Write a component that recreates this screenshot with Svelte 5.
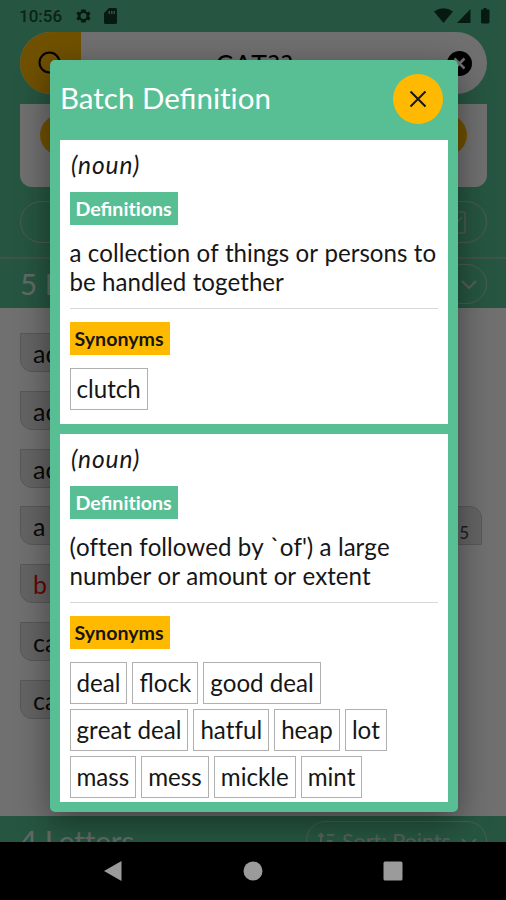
<script>
  const tiles = [
    { word: 'ad' },
    { word: 'ac' },
    { word: 'ac' },
    { word: 'a', points: 5 },
    { word: 'b', blank: true },
    { word: 'ca' },
    { word: 'ca' }
  ];

  const entries = [
    {
      type: '(noun)',
      text: 'a collection of things or persons to be handled together',
      synonyms: ['clutch']
    },
    {
      type: '(noun)',
      text: "(often followed by `of') a large number or amount or extent",
      synonyms: ['deal', 'flock', 'good deal', 'great deal', 'hatful', 'heap', 'lot', 'mass', 'mess', 'mickle', 'mint']
    }
  ];

  let open = $state(true);
</script>

<div class="screen">
  <div class="page">
    <header>
      <div class="status">
        <span class="time">10:56</span>
        <svg class="gear" width="15" height="16" viewBox="2 2 20 20"><path fill-rule="evenodd" d="M19.4 13a7.500 7.500 0 0 0 0-2l2.100-1.600-2-3.500-2.500 1a7.600 7.600 0 0 0-1.700-1L15 3.200h-6l-.3 2.700a7.600 7.600 0 0 0-1.700 1l-2.500-1-2 3.500L4.600 11a7.500 7.500 0 0 0 0 2l-2.100 1.600 2 3.500 2.500-1a7.600 7.600 0 0 0 1.700 1l.3 2.700h6l.3-2.700a7.600 7.600 0 0 0 1.700-1l2.500 1 2-3.500zM12 16a4 4 0 1 1 0-8 4 4 0 0 1 0 8z" /></svg>
        <svg class="sd" width="13" height="16" viewBox="0 0 13 16"><path fill-rule="evenodd" d="M5 0h6.500A1.500 1.500 0 0 1 13 1.500v13a1.500 1.500 0 0 1-1.500 1.500h-10A1.500 1.500 0 0 1 0 14.500V5zM4.500 3v3H6V3zM7 3v3h1.500V3zM9.500 3v3H11V3z" /></svg>
        <svg class="signals" width="56" height="16" viewBox="0 0 56 16"><path d="M0 3.500Q9.500-3 19 3.500L9.500 15zM23 15 36.500 1v14zM47.500 1.500h2V0h3v1.500h2q1 0 1 1V14q0 1.500-1.500 1.500h-5.500q-1.500 0-1.500-1.500V2.500q0-1 .5-1z" /></svg>
      </div>

      <div class="search">
        <div class="search-btn">
          <svg width="26" height="26" viewBox="0 0 26 26"><circle cx="11.500" cy="11.500" r="10" /><path d="m18.500 18.500 6 6" /></svg>
        </div>
        <span class="query">CAT??</span>
        <svg class="clear" width="25" height="25" viewBox="0 0 25 25"><circle cx="12.500" cy="12.500" r="12.500" /><path d="m7.500 7.500 10 10m0-10-10 10" /></svg>
      </div>

      <div class="panel"><i></i><i></i></div>

      <div class="filter">
        <svg width="25" height="25" viewBox="0 0 25 25"><rect x="2" y="2" width="21" height="21" rx="1" /><path d="m6 12 5 5 9-10" /></svg>
      </div>
    </header>

    <div class="section">
      <h2>5 Letters</h2>
      <div class="sort">
        <svg width="16" height="18" viewBox="0 0 16 18"><path d="M3 2v14M.5 4.500 3 2l2.500 2.500M9 3h7M9 9h5.500M9 15h4" /></svg>
        <span>Sort: Points</span>
        <svg class="chevron" width="18" height="12" viewBox="0 0 18 12"><path d="m2 2 7 7 7-7" /></svg>
      </div>
    </div>

    <div class="tiles">
      {#each tiles as tile}
        <div class="tile" class:blank={tile.blank} class:wide={tile.points}>
          <span>{tile.word}</span>
          {#if tile.points}<small>{tile.points}</small>{/if}
        </div>
      {/each}
    </div>

    <div class="section last">
      <h2>4 Letters</h2>
      <div class="sort">
        <svg width="16" height="18" viewBox="0 0 16 18"><path d="M3 2v14M.5 4.500 3 2l2.500 2.500M9 3h7M9 9h5.500M9 15h4" /></svg>
        <span>Sort: Points</span>
        <svg class="chevron" width="18" height="12" viewBox="0 0 18 12"><path d="m2 2 7 7 7-7" /></svg>
      </div>
    </div>
  </div>

  {#if open}
    <div class="overlay">
      <div class="modal">
        <div class="modal-head">
          <h1>Batch <span class="liga">Defi</span>nition</h1>
          <button aria-label="Close" onclick={() => (open = false)}>
            <svg width="18" height="18" viewBox="0 0 18 18"><path d="m1.500 1.500 15 15m0-15-15 15" /></svg>
          </button>
        </div>
        <div class="entries">
          {#each entries as entry}
            <section class="entry">
              <em>{entry.type}</em>
              <b class="label"><span class="liga">Defi</span>nitions</b>
              <p>{entry.text}</p>
              <hr />
              <b class="label syn">Synonyms</b>
              <div class="words">
                {#each entry.synonyms as word}
                  <span class:liga={word.startsWith('fl')}>{word}</span>
                {/each}
              </div>
            </section>
          {/each}
        </div>
      </div>
    </div>
  {/if}

  <nav>
    <svg width="20" height="22" viewBox="0 0 20 22"><path d="M18.500 1v20L1 11z" /></svg>
    <svg width="20" height="20" viewBox="0 0 20 20"><circle cx="10" cy="10" r="9.500" /></svg>
    <svg width="20" height="20" viewBox="0 0 20 20"><rect x=".5" y=".5" width="19" height="19" rx="1.500" /></svg>
  </nav>
</div>

<style>
  :global(body) { margin: 0; }
  .screen {
    position: relative; width: 506px; height: 900px; overflow: hidden;
    display: flex; flex-direction: column;
    font-family: Lato, sans-serif; color: #161616;
    font-variant-ligatures: none;
  }
  .screen * { box-sizing: border-box; }
  .liga { font-variant-ligatures: common-ligatures; }
  svg { display: block; flex: none; }
  h1, h2, p { margin: 0; font-weight: 400; }

  .page { height: 842px; overflow: hidden; background: #fff; }
  header { height: 259px; padding: 0 19px 0 20px; background: #58c594; border-bottom: 2px solid #93bda9; }
  .status { display: flex; align-items: center; height: 32px; font: 500 17px Roboto, sans-serif; color: #195037; }
  .status svg { fill: #103d28; }
  .time { margin-left: -1px; }
  .gear { margin-left: 14px; }
  .sd { margin-left: 13px; }
  .signals { margin-left: auto; margin-right: -3px; }
  .search { display: flex; align-items: center; height: 62px; border-radius: 31px; background: #fff; overflow: hidden; }
  .search-btn { width: 61px; height: 62px; padding: 19px 0 0 18px; background: #ffb900; }
  .search-btn svg { fill: none; stroke: #000; stroke-width: 2; }
  .query { flex: 1; text-align: center; font-size: 26.500px; letter-spacing: 1px; padding: 2px 19px 0 0; color: #000; }
  .clear { margin-right: 15px; }
  .clear path { stroke: #fff; stroke-width: 2.500; }
  .panel {
    display: flex; justify-content: space-between; height: 83px; margin-top: 10px;
    padding: 11px 20px; border-radius: 0 0 12px 12px; background: #fff;
  }
  .panel i { width: 40px; height: 40px; border-radius: 50%; background: #ffb900; }
  .filter {
    display: flex; align-items: center; justify-content: flex-end; height: 42px; margin-top: 14px;
    padding-right: 19px; border: 1px solid #b0cdbf; border-radius: 21px;
  }
  .filter svg { fill: none; stroke: #b8d0c5; stroke-width: 1.500; }

  .section { display: flex; align-items: center; justify-content: space-between; height: 49px; padding: 0 19px 0 20px; background: #58c594; color: #e1f1e9; }
  h2 { font-size: 29.500px; }
  .sort {
    display: flex; align-items: center; gap: 8px; width: 181px; height: 40px; padding: 0 8px 0 11px;
    border: 1px solid #b0cdbf; border-radius: 20px; font-size: 21.500px; white-space: nowrap; color: #c4dacf;
  }
  .sort svg { fill: none; stroke: currentColor; stroke-width: 2; }
  .sort .chevron { margin: 3px 0 0 auto; }
  .tiles { display: flex; flex-direction: column; align-items: flex-start; gap: 18.800px; height: 508px; padding: 25px 24px 0 20px; }
  .tile {
    display: flex; align-items: center; justify-content: space-between; width: 100px; height: 39px;
    padding: 1px 12px 0; font-size: 25px; background: #e4e4e4;
    border: 1px solid #c8c8c8; border-radius: 0 12px;
  }
  .wide { width: 100%; }
  .tile small { align-self: flex-end; font-size: 17px; padding-bottom: 1px; color: #444; }
  .blank { color: #e81010; }
  .last { height: 60px; align-items: flex-start; padding-top: 5px; }
  .last h2 { line-height: 40px; }

  .overlay {
    position: absolute; inset: 0 0 58px; padding: 59.500px 48.500px 30px 50px; background: rgba(0, 0, 0, 0.56);
  }
  .modal {
    display: flex; flex-direction: column; height: 752.500px; padding: 0 10px 10px 9.500px; overflow: hidden;
    background: #58bf94; border-radius: 5px; box-shadow: 0 10px 34px rgba(0, 0, 0, 0.42);
  }
  .modal-head { display: flex; align-items: center; justify-content: space-between; flex: none; height: 80px; padding: 0 4.500px 1px 0; }
  h1 { padding: 0 0 3px 0.5px; font-size: 29.500px; color: #fff; }
  button { display: grid; place-items: center; width: 50px; height: 50px; padding: 0; border: 0; border-radius: 50%; background: #ffb900; }
  button svg { fill: none; stroke: #161616; stroke-width: 2; }
  .entries { flex: 1; overflow: hidden; }
  .entry { display: flex; flex-direction: column; align-items: flex-start; padding: 9px 9.500px 9px 10px; background: #fff; }
  .entry + .entry { margin-top: 9.500px; }
  .entry:first-child { height: 284.500px; }
  em { height: 32px; padding-left: 1.500px; font-size: 24.500px; line-height: 31px; letter-spacing: 0.9px; }
  .label { height: 33px; margin-top: 11px; padding: 0 6px; font-size: 19.600px; line-height: 33px; color: #fff; background: #58bf94; }
  .label.syn { margin-top: 13px; padding: 0 6px 0 5px; color: #161616; background: #ffb900; }
  p { margin-top: 13px; font-size: 24.100px; line-height: 29.400px; font-kerning: none; word-spacing: 0.2px; }
  hr { width: 100%; height: 1px; margin: 12px 0 0; border: 0; background: #d8d8d8; }
  .words { display: flex; flex-wrap: wrap; gap: 5px; margin-top: 13px; }
  .words span { height: 42px; padding: 0 6px; border: 1px solid #b0b0b0; font-size: 24.150px; line-height: 40px; white-space: nowrap; font-kerning: none; }

  nav { display: flex; align-items: center; justify-content: space-between; height: 58px; padding: 0 103px; background: #000; }
  nav svg { fill: #9b9b9b; }
</style>
